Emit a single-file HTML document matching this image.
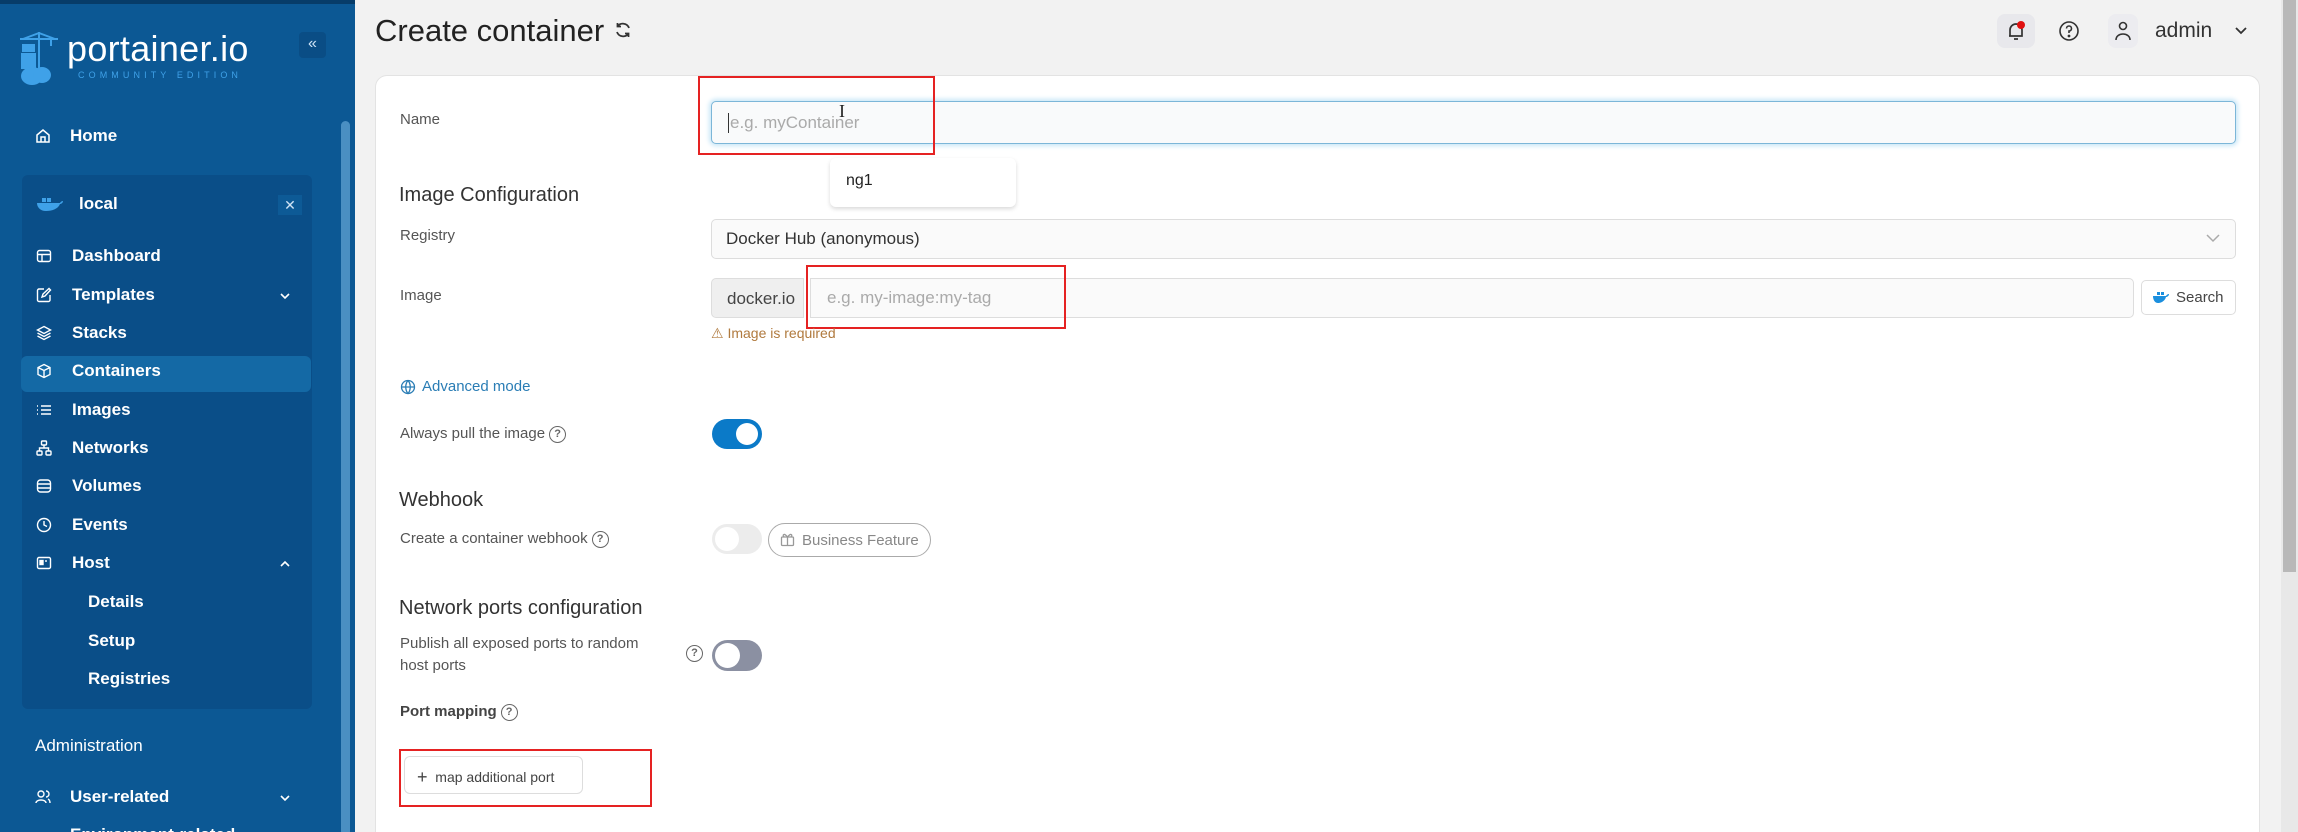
<!DOCTYPE html>
<html><head><meta charset="utf-8"><style>
*{box-sizing:border-box;margin:0;padding:0}
html{width:2298px;height:832px;overflow:hidden}
body{width:2298px;height:832px;overflow:hidden;background:#f2f2f2;font-family:"Liberation Sans",Arial,sans-serif;position:relative}
.a{position:absolute}
#sb{left:0;top:0;width:355px;height:832px;background:#0c5894;border-top:4px solid #073c69}
.si{position:absolute;color:#fff;font-size:17px;font-weight:bold;line-height:20px;white-space:nowrap}
.ic{position:absolute;width:16px;height:16px}
.chev{position:absolute;left:278px;width:14px;height:14px}
.lbl{position:absolute;left:400px;color:#555;font-size:15px;line-height:18px;white-space:nowrap}
.h{position:absolute;left:399px;color:#333;font-size:20px;line-height:24px}
.inp{position:absolute;border:1px solid #ddd;border-radius:5px;background:#fafafa;font-size:17px;color:#aaa;padding-left:16px;display:flex;align-items:center}
.red{position:absolute;border:2px solid #e52222}
.q{display:inline-block;width:17px;height:17px;border:1.5px solid #666;border-radius:50%;font-size:11px;line-height:14px;text-align:center;color:#666;vertical-align:middle;margin-left:4px;font-weight:bold}
</style></head><body>
<div id="sb" class="a">
 <svg class="a" style="left:18px;top:26px" width="42" height="58" viewBox="0 0 42 58"><g stroke="#3fa1e8" stroke-width="2" fill="none"><path d="M2 9H40M21 2V40M21 3L5 9M21 3L37 9M33 9V16"/></g><rect x="4" y="14" width="13" height="8" fill="#3fa1e8"/><rect x="3" y="23" width="15" height="8" fill="#3fa1e8"/><rect x="3" y="31" width="15" height="8" fill="#3fa1e8"/><ellipse cx="14" cy="46" rx="11" ry="9" fill="#3fa1e8"/><ellipse cx="24" cy="45" rx="9" ry="8" fill="#3fa1e8"/></svg>
 <div class="a" style="left:67px;top:27px;color:#fff;font-size:36px;line-height:36px;letter-spacing:0.3px">portainer.io</div>
 <div class="a" style="left:78px;top:66px;color:#3fa1e8;font-size:9px;letter-spacing:4.1px">COMMUNITY EDITION</div>
 <div class="a" style="left:299px;top:28px;width:27px;height:26px;background:#0a4d85;border-radius:4px;color:#cfe3f5;font-size:16px;text-align:center;line-height:24px">«</div>
 <div class="a" style="left:341px;top:117px;width:9px;height:715px;background:#4a8fc2;border-radius:5px"></div>
 <svg class="ic" style="left:35px;top:124px" viewBox="0 0 16 16" fill="none" stroke="#fff" stroke-width="1.5"><path d="M2 7L8 2L14 7V14H2Z M6 14V9H10V14"/></svg>
 <div class="si" style="left:70px;top:122px">Home</div>
 <div class="a" style="left:22px;top:171px;width:290px;height:534px;background:#0a4e88;border-radius:6px"></div>
 <svg class="a" style="left:36px;top:192px" width="28" height="16" viewBox="0 0 28 16"><path d="M1 7H24C25 5 27 5 27 5C27 7 25 8 24 8C22 13 16 15 10 15C4 15 1 11 1 7Z" fill="#3fa1e8"/><rect x="6" y="2" width="4" height="4" fill="#3fa1e8"/><rect x="11" y="2" width="4" height="4" fill="#3fa1e8"/></svg>
 <div class="si" style="left:79px;top:190px">local</div>
 <div class="a" style="left:278px;top:191px;width:24px;height:20px;background:#0d5a96;color:#cfe3f5;font-size:14px;text-align:center;line-height:20px">✕</div>
 <div class="a" style="left:21px;top:352px;width:290px;height:36px;background:#1469a5;border-radius:6px"></div>
 <svg class="ic" style="left:36px;top:244px" viewBox="0 0 16 16" fill="none" stroke="#fff" stroke-width="1.4"><rect x="1.5" y="2.5" width="13" height="11" rx="2"/><path d="M1.5 6.5H14.5M6 6.5V13.5"/></svg>
 <div class="si" style="left:72px;top:242px">Dashboard</div>
 <svg class="ic" style="left:36px;top:283px" viewBox="0 0 16 16" fill="none" stroke="#fff" stroke-width="1.4"><path d="M8 2H3A1.5 1.5 0 0 0 1.5 3.5V13A1.5 1.5 0 0 0 3 14.5H12.5A1.5 1.5 0 0 0 14 13V8M6 10L7 7L13 1.5L14.5 3L9 9Z"/></svg>
 <div class="si" style="left:72px;top:281px">Templates</div>
 <svg class="chev" style="top:285px" viewBox="0 0 14 14" fill="none" stroke="#fff" stroke-width="1.6"><path d="M3 5L7 9L11 5"/></svg>
 <svg class="ic" style="left:36px;top:321px" viewBox="0 0 16 16" fill="none" stroke="#fff" stroke-width="1.4"><path d="M8 1.5L14.5 5L8 8.5L1.5 5Z M1.5 8L8 11.5L14.5 8 M1.5 11L8 14.5L14.5 11"/></svg>
 <div class="si" style="left:72px;top:319px">Stacks</div>
 <svg class="ic" style="left:36px;top:359px" viewBox="0 0 16 16" fill="none" stroke="#fff" stroke-width="1.4"><path d="M8 1.5L14 4.5V11.5L8 14.5L2 11.5V4.5Z M2 4.5L8 7.5L14 4.5 M8 7.5V14.5"/></svg>
 <div class="si" style="left:72px;top:357px">Containers</div>
 <svg class="ic" style="left:36px;top:398px" viewBox="0 0 16 16" fill="none" stroke="#fff" stroke-width="1.4"><path d="M5 4H15M5 8H15M5 12H15M1 4H2M1 8H2M1 12H2"/></svg>
 <div class="si" style="left:72px;top:396px">Images</div>
 <svg class="ic" style="left:36px;top:436px" viewBox="0 0 16 16" fill="none" stroke="#fff" stroke-width="1.4"><rect x="5.5" y="1" width="5" height="4" rx="1"/><rect x="1" y="11" width="5" height="4" rx="1"/><rect x="10" y="11" width="5" height="4" rx="1"/><path d="M8 5V8M3.5 11V8H12.5V11"/></svg>
 <div class="si" style="left:72px;top:434px">Networks</div>
 <svg class="ic" style="left:36px;top:474px" viewBox="0 0 16 16" fill="none" stroke="#fff" stroke-width="1.4"><rect x="1.5" y="2" width="13" height="12" rx="3"/><path d="M1.5 6H14.5M1.5 10H14.5"/></svg>
 <div class="si" style="left:72px;top:472px">Volumes</div>
 <svg class="ic" style="left:36px;top:513px" viewBox="0 0 16 16" fill="none" stroke="#fff" stroke-width="1.4"><circle cx="8" cy="8" r="6.5"/><path d="M8 4V8L11 9.5"/></svg>
 <div class="si" style="left:72px;top:511px">Events</div>
 <svg class="ic" style="left:36px;top:551px" viewBox="0 0 16 16" fill="none" stroke="#fff" stroke-width="1.4"><rect x="1.5" y="2.5" width="13" height="11" rx="1.5"/><rect x="4" y="5.5" width="3" height="4" fill="#fff"/><path d="M9 6H11"/></svg>
 <div class="si" style="left:72px;top:549px">Host</div>
 <svg class="chev" style="top:553px" viewBox="0 0 14 14" fill="none" stroke="#fff" stroke-width="1.6"><path d="M3 9L7 5L11 9"/></svg>
 <div class="si" style="left:88px;top:588px">Details</div>
 <div class="si" style="left:88px;top:627px">Setup</div>
 <div class="si" style="left:88px;top:665px">Registries</div>
 <div class="si" style="left:35px;top:732px;font-weight:normal">Administration</div>
 <svg class="ic" style="left:35px;top:785px" viewBox="0 0 16 16" fill="none" stroke="#fff" stroke-width="1.4"><circle cx="6" cy="5" r="3"/><path d="M1 14C1 10 11 10 11 14M11 2A3 3 0 0 1 11 8M13 10C15 11 15 13 15 14"/></svg>
 <div class="si" style="left:70px;top:783px">User-related</div>
 <svg class="chev" style="top:787px" viewBox="0 0 14 14" fill="none" stroke="#fff" stroke-width="1.6"><path d="M3 5L7 9L11 5"/></svg>
 <div class="si" style="left:70px;top:821px">Environment-related</div>
</div>

<div class="a" style="left:2281px;top:0;width:17px;height:832px;background:#e8e8e8"></div>
<div class="a" style="left:2283px;top:0;width:13px;height:572px;background:#b8b8b8"></div>

<div class="a" style="left:375px;top:12px;font-size:31px;color:#222;line-height:38px">Create container</div>
<svg class="a" style="left:614px;top:21px" width="18" height="18" viewBox="0 0 18 18" fill="none" stroke="#333" stroke-width="1.8"><path d="M15 7A6.5 6.5 0 0 0 3.5 5.5M3 11A6.5 6.5 0 0 0 14.5 12.5M3.5 2V5.5H7M14.5 16V12.5H11"/></svg>

<div class="a" style="left:1997px;top:14px;width:38px;height:34px;background:#e8e8ec;border-radius:8px"></div>
<svg class="a" style="left:2005px;top:20px" width="22" height="22" viewBox="0 0 22 22" fill="none" stroke="#333" stroke-width="1.7"><path d="M5 16V10A6 6 0 0 1 17 10V16H4M9 19H13"/></svg>
<div class="a" style="left:2017px;top:21px;width:8px;height:8px;background:#e01010;border-radius:50%"></div>
<svg class="a" style="left:2058px;top:20px" width="22" height="22" viewBox="0 0 22 22" fill="none" stroke="#333" stroke-width="1.6"><circle cx="11" cy="11" r="9"/><path d="M8.5 8.5A2.5 2.5 0 1 1 11 11V13"/><circle cx="11" cy="16" r=".6" fill="#333"/></svg>
<div class="a" style="left:2108px;top:14px;width:30px;height:34px;background:#ececf0;border-radius:8px"></div>
<svg class="a" style="left:2112px;top:20px" width="22" height="22" viewBox="0 0 22 22" fill="none" stroke="#333" stroke-width="1.6"><circle cx="11" cy="6" r="3.5"/><path d="M4 20C4 12 18 12 18 20"/></svg>
<div class="a" style="left:2155px;top:19px;font-size:21px;color:#333">admin</div>
<svg class="a" style="left:2233px;top:24px" width="16" height="14" viewBox="0 0 16 14" fill="none" stroke="#333" stroke-width="1.8"><path d="M3 4L8 9L13 4"/></svg>

<div class="a" style="left:375px;top:75px;width:1885px;height:757px;background:#fff;border:1px solid #e3e3e3;border-bottom:none;border-radius:12px 12px 0 0"></div>

<div class="lbl" style="top:111px">Name</div>
<div class="inp" style="left:711px;top:101px;width:1525px;height:43px;border-color:#7cb6d8;box-shadow:0 0 5px 2px #c9e7f7;background:#f9fafb"><span style="border-left:1.5px solid #333;height:20px;margin-right:1px"></span>e.g. myContainer</div>
<div class="a" style="left:839px;top:101px;font-size:18px;color:#222;font-family:'Liberation Serif',serif">I</div>
<div class="red" style="left:698px;top:76px;width:237px;height:79px"></div>
<div class="a" style="left:830px;top:158px;width:186px;height:49px;background:#fff;border-radius:6px;box-shadow:0 2px 4px rgba(0,0,0,.15);font-size:16px;color:#222;padding:14px 0 0 16px">ng1</div>

<div class="h" style="top:183px">Image Configuration</div>
<div class="lbl" style="top:227px">Registry</div>
<div class="inp" style="left:711px;top:219px;width:1525px;height:40px;color:#333;padding-left:14px">Docker Hub (anonymous)</div>
<svg class="a" style="left:2204px;top:231px" width="18" height="14" viewBox="0 0 18 14" fill="none" stroke="#aaa" stroke-width="1.5"><path d="M3 4L9 10L15 4"/></svg>

<div class="lbl" style="top:287px">Image</div>
<div class="a" style="left:711px;top:278px;width:93px;height:40px;background:#efefef;border:1px solid #ddd;border-radius:5px 0 0 5px;font-size:17px;color:#444;padding:10px 0 0 15px">docker.io</div>
<div class="inp" style="left:810px;top:278px;width:1324px;height:40px;border-radius:0 5px 5px 0">e.g. my-image:my-tag</div>
<div class="a" style="left:2141px;top:280px;width:95px;height:35px;border:1px solid #ddd;border-radius:5px;background:#fff;font-size:15px;color:#444;padding:8px 0 0 34px">Search</div>
<svg class="a" style="left:2153px;top:291px" width="16" height="12" viewBox="0 0 16 12"><path d="M0 5H13C14 3 16 3 16 3C16 5 14 6 13 6C12 10 8 12 5 12C2 12 0 9 0 5Z" fill="#1b8fde"/><rect x="4" y="1" width="3" height="3" fill="#1b8fde"/><rect x="8" y="1" width="3" height="3" fill="#1b8fde"/></svg>
<div class="red" style="left:806px;top:265px;width:260px;height:64px"></div>
<div class="a" style="left:711px;top:325px;font-size:14px;color:#b07a3e">⚠ Image is required</div>

<svg class="a" style="left:400px;top:379px" width="16" height="16" viewBox="0 0 16 16" fill="none" stroke="#2a7db5" stroke-width="1.3"><circle cx="8" cy="8" r="6.5"/><path d="M1.5 8H14.5M8 1.5C5 5 5 11 8 14.5C11 11 11 5 8 1.5"/></svg>
<div class="a" style="left:422px;top:378px;font-size:15px;color:#2a7db5">Advanced mode</div>

<div class="lbl" style="top:425px">Always pull the image<span class="q">?</span></div>
<div class="a" style="left:712px;top:419px;width:50px;height:30px;background:#0b7ac8;border-radius:15px"><div class="a" style="left:24px;top:4px;width:22px;height:22px;background:#fff;border-radius:50%"></div></div>

<div class="h" style="top:488px">Webhook</div>
<div class="lbl" style="top:530px">Create a container webhook<span class="q">?</span></div>
<div class="a" style="left:712px;top:524px;width:50px;height:30px;background:#ececec;border-radius:15px"><div class="a" style="left:3px;top:3px;width:24px;height:24px;background:#fff;border-radius:50%"></div></div>
<div class="a" style="left:768px;top:523px;width:163px;height:34px;border:1.5px solid #aaa;border-radius:17px;font-size:15px;color:#888;padding:8px 0 0 33px">Business Feature</div>
<svg class="a" style="left:780px;top:532px" width="15" height="15" viewBox="0 0 15 15" fill="none" stroke="#999" stroke-width="1.3"><rect x="1.5" y="5" width="12" height="8.5" rx="1"/><path d="M7.5 5V13.5M4 5C2 3 4 0.5 7.5 5C11 0.5 13 3 11 5"/></svg>

<div class="h" style="top:596px">Network ports configuration</div>
<div class="lbl" style="top:633px;line-height:22px">Publish all exposed ports to random<br>host ports</div>
<span class="q a" style="left:686px;top:645px;margin:0">?</span>
<div class="a" style="left:712px;top:640px;width:50px;height:31px;background:#8b90a2;border-radius:16px"><div class="a" style="left:3px;top:3px;width:25px;height:25px;background:#fff;border-radius:50%"></div></div>

<div class="lbl" style="top:703px;font-weight:bold;color:#444">Port mapping<span class="q">?</span></div>
<div class="red" style="left:399px;top:749px;width:253px;height:58px"></div>
<div class="a" style="left:404px;top:756px;width:179px;height:38px;border:1px solid #ddd;border-radius:6px;background:#fff;font-size:14px;color:#444;padding:10px 0 0 12px"><span style="font-size:18px;vertical-align:-1px">+</span>&nbsp; map additional port</div>
</body></html>
